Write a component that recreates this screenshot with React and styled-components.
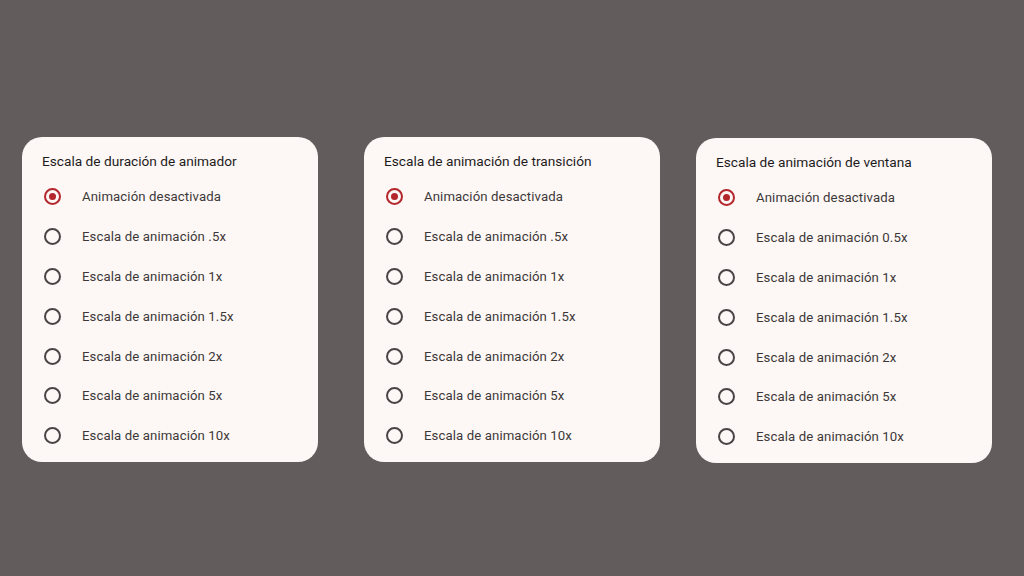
import styled, { createGlobalStyle } from "styled-components";

const GlobalStyle = createGlobalStyle`
  html, body {
    margin: 0;
    padding: 0;
    background: #625d5c;
  }
  body {
    font-family: Roboto, "Noto Sans", "Liberation Sans", sans-serif;
  }
`;

const scales = [".5x", "1x", "1.5x", "2x", "5x", "10x"];

const dialogs = [
  { title: "Escala de duración de animador", shift: 22, top: 0, scales },
  { title: "Escala de animación de transición", shift: 46, top: 0, scales },
  {
    title: "Escala de animación de ventana",
    shift: 36,
    top: 1,
    scales: ["0.5x", "1x", "1.5x", "2x", "5x", "10x"],
  },
];

const OptionDialog = ({ title, scales, shift, top }) => {
  const options = ["Animación desactivada", ...scales.map((s) => `Escala de animación ${s}`)];

  return (
    <StyledCard $shift={shift} $top={top}>
      <StyledTitle>{title}</StyledTitle>
      <StyledList>
        {options.map((label, i) => (
          <StyledOption key={label}>
            <StyledRadio $checked={i === 0} />
            <span>{label}</span>
          </StyledOption>
        ))}
      </StyledList>
    </StyledCard>
  );
};

export default function App() {
  return (
    <>
      <GlobalStyle />
      <StyledPage>
        {dialogs.map((d) => (
          <OptionDialog key={d.title} {...d} />
        ))}
      </StyledPage>
    </>
  );
}

const StyledPage = styled.div`
  width: 1024px;
  height: 576px;
  box-sizing: border-box;
  padding-top: 137px;
  display: flex;
  align-items: flex-start;
`;

const StyledCard = styled.div`
  width: 296px;
  height: 325px;
  box-sizing: border-box;
  margin-left: ${(p) => p.$shift}px;
  margin-top: ${(p) => p.$top}px;
  padding: 15px 19px 0 20px;
  background: #fdf8f6;
  border-radius: 20px;
`;

const StyledTitle = styled.div`
  font-size: 13.7px;
  line-height: 18px;
  color: #1f1b1b;
`;

const StyledList = styled.div`
  margin-top: 7px;
  display: flex;
  flex-direction: column;
`;

const StyledOption = styled.div`
  height: 39.8px;
  display: flex;
  align-items: center;
  gap: 21px;
  padding-left: 2px;
  font-size: 13.2px;
  color: #3d3838;
  letter-spacing: 0.1px;
`;

const StyledRadio = styled.span`
  width: 17px;
  height: 17px;
  box-sizing: border-box;
  border-radius: 50%;
  border: 2px solid ${(p) => (p.$checked ? "#b3262b" : "#4a4545")};
  display: flex;
  align-items: center;
  justify-content: center;
  flex-shrink: 0;

  &::after {
    content: "";
    width: 7px;
    height: 7px;
    border-radius: 50%;
    background: #b3262b;
    display: ${(p) => (p.$checked ? "block" : "none")};
  }
`;
